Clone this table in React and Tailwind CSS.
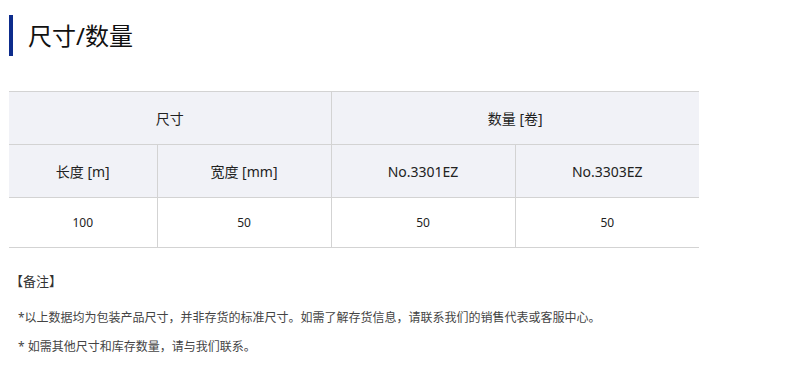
import React from 'react';

const App = () => {
  const font = { fontFamily: '"Noto Sans", "Noto Sans CJK SC", sans-serif' };

  return (
    <div className="w-[802px] h-[377px] bg-white text-[#222]" style={font}>
      {/* Title */}
      <div className="pt-[15px] pl-[9px] flex items-center">
        <div className="w-[4px] h-[41px] bg-[#0d2c8c]"></div>
        <h2 className="ml-[15px] text-[24px] leading-none text-[#111]">尺寸/数量</h2>
      </div>

      {/* Table */}
      <table className="ml-[9px] mt-[35px] w-[690px] border-collapse table-fixed text-center">
        <colgroup>
          <col className="w-[148px]" />
          <col className="w-[174px]" />
          <col className="w-[184px]" />
          <col className="w-[184px]" />
        </colgroup>
        <thead>
          <tr className="bg-[#f1f2f7] h-[53px] text-[14px]">
            <th colSpan={2} className="font-normal border-t border-b border-r border-[#d3d3d3]">尺寸</th>
            <th colSpan={2} className="font-normal border-t border-b border-[#d3d3d3]">数量 [卷]</th>
          </tr>
          <tr className="bg-[#f1f2f7] h-[53px] text-[14px]">
            <th className="font-normal border-b border-r border-[#d3d3d3]">长度 [m]</th>
            <th className="font-normal border-b border-r border-[#d3d3d3]">宽度 [mm]</th>
            <th className="font-normal border-b border-r border-[#d3d3d3]">No.3301EZ</th>
            <th className="font-normal border-b border-[#d3d3d3]">No.3303EZ</th>
          </tr>
        </thead>
        <tbody>
          <tr className="h-[50px] text-[12px]">
            <td className="border-b border-r border-[#d3d3d3]">100</td>
            <td className="border-b border-r border-[#d3d3d3]">50</td>
            <td className="border-b border-r border-[#d3d3d3]">50</td>
            <td className="border-b border-[#d3d3d3]">50</td>
          </tr>
        </tbody>
      </table>

      {/* Notes */}
      <div className="pl-[10px] mt-[27px] text-[13px] leading-none text-[#333]">【备注】</div>
      <div className="pl-[18px] mt-[24px] text-[12px] leading-none text-[#444] flex flex-col gap-[17px]">
        <p>*以上数据均为包装产品尺寸，并非存货的标准尺寸。如需了解存货信息，请联系我们的销售代表或客服中心。</p>
        <p>* 如需其他尺寸和库存数量，请与我们联系。</p>
      </div>
    </div>
  );
};

export default App;
